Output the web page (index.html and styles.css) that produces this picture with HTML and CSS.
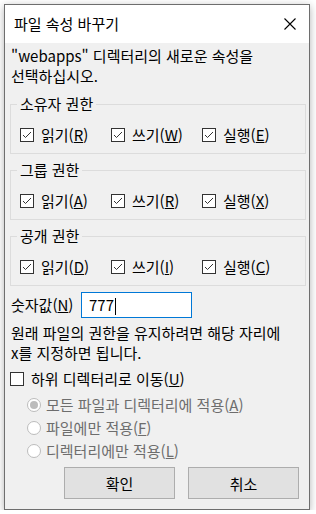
FILE: index.html
```html
<!DOCTYPE html>
<html lang="ko">
<head>
    <meta charset="UTF-8">
    <meta name="viewport" content="width=device-width, initial-scale=1.0">
    <title>파일 속성 바꾸기</title>
    <link rel="stylesheet" href="styles.css">
</head>
<body>

    <div class="dialog">
        <!-- title bar -->
        <div class="titlebar">
            <span class="title">파일 속성 바꾸기</span>
            <svg class="close" width="12" height="12" viewBox="0 0 12 12">
                <path d="M0.5 0.5 L11.5 11.5 M11.5 0.5 L0.5 11.5" stroke="#000" stroke-width="1.1" fill="none"/>
            </svg>
        </div>

        <div class="content">
            <p class="intro">"webapps" 디렉터리의 새로운 속성을<br>선택하십시오.</p>

            <fieldset class="group">
                <legend>소유자 권한</legend>
                <div class="checks">
                    <label class="check"><span class="box"><svg width="12" height="12" viewBox="0 0 12 12"><polyline points="2,6 4.5,8.5 10,3" fill="none" stroke="#333" stroke-width="1"/></svg></span><span>읽기(<u>R</u>)</span></label>
                    <label class="check"><span class="box"><svg width="12" height="12" viewBox="0 0 12 12"><polyline points="2,6 4.5,8.5 10,3" fill="none" stroke="#333" stroke-width="1"/></svg></span><span>쓰기(<u>W</u>)</span></label>
                    <label class="check"><span class="box"><svg width="12" height="12" viewBox="0 0 12 12"><polyline points="2,6 4.5,8.5 10,3" fill="none" stroke="#333" stroke-width="1"/></svg></span><span>실행(<u>E</u>)</span></label>
                </div>
            </fieldset>

            <fieldset class="group">
                <legend>그룹 권한</legend>
                <div class="checks">
                    <label class="check"><span class="box"><svg width="12" height="12" viewBox="0 0 12 12"><polyline points="2,6 4.5,8.5 10,3" fill="none" stroke="#333" stroke-width="1"/></svg></span><span>읽기(<u>A</u>)</span></label>
                    <label class="check"><span class="box"><svg width="12" height="12" viewBox="0 0 12 12"><polyline points="2,6 4.5,8.5 10,3" fill="none" stroke="#333" stroke-width="1"/></svg></span><span>쓰기(<u>R</u>)</span></label>
                    <label class="check"><span class="box"><svg width="12" height="12" viewBox="0 0 12 12"><polyline points="2,6 4.5,8.5 10,3" fill="none" stroke="#333" stroke-width="1"/></svg></span><span>실행(<u>X</u>)</span></label>
                </div>
            </fieldset>

            <fieldset class="group">
                <legend>공개 권한</legend>
                <div class="checks">
                    <label class="check"><span class="box"><svg width="12" height="12" viewBox="0 0 12 12"><polyline points="2,6 4.5,8.5 10,3" fill="none" stroke="#333" stroke-width="1"/></svg></span><span>읽기(<u>D</u>)</span></label>
                    <label class="check"><span class="box"><svg width="12" height="12" viewBox="0 0 12 12"><polyline points="2,6 4.5,8.5 10,3" fill="none" stroke="#333" stroke-width="1"/></svg></span><span>쓰기(<u>I</u>)</span></label>
                    <label class="check"><span class="box"><svg width="12" height="12" viewBox="0 0 12 12"><polyline points="2,6 4.5,8.5 10,3" fill="none" stroke="#333" stroke-width="1"/></svg></span><span>실행(<u>C</u>)</span></label>
                </div>
            </fieldset>

            <div class="num_row">
                <span class="num_label">숫자값(<u>N</u>)</span>
                <div class="num_input">777<span class="caret"></span></div>
            </div>

            <p class="hint">원래 파일의 권한을 유지하려면 해당 자리에<br>x를 지정하면 됩니다.</p>

            <label class="check subdir"><span class="box"></span><span>하위 디렉터리로 이동(<u>U</u>)</span></label>

            <div class="radios">
                <div class="radio"><span class="dot on"></span><span>모든 파일과 디렉터리에 적용(<u>A</u>)</span></div>
                <div class="radio"><span class="dot"></span><span>파일에만 적용(<u>F</u>)</span></div>
                <div class="radio"><span class="dot"></span><span>디렉터리에만 적용(<u>L</u>)</span></div>
            </div>

            <div class="buttons">
                <button>확인</button>
                <button>취소</button>
            </div>
        </div>
    </div>

</body>
</html>
```

FILE: styles.css
```css
body
{
    margin: 0;
    padding: 4px 0 0 4px;
    background-color: #fff;
    font-family: "Noto Sans CJK KR", "Noto Sans", sans-serif;
    font-size: 15px;
    color: #000;
}
.dialog
{
    width: 306px;
    box-sizing: border-box;
    border: 1px solid #6e6e6e;
    box-shadow: 0 2px 8px rgba(0, 0, 0, 0.3);
}
.titlebar
{
    height: 38px;
    background-color: #fff;
    display: flex;
    align-items: center;
    justify-content: space-between;
    padding: 0 13px 0 9px;
}
.title
{
    line-height: 20px;
}
.content
{
    background-color: #f0f0f0;
    padding: 3px 3px 10px 5px;
}
.intro
{
    margin: 0 0 8px 1px;
    line-height: 20px;
}

/* group boxes */
.group
{
    margin: 0 0 6px 0;
    padding: 11px 0 8px 9px;
    border: 1px solid #dcdcdc;
}
.group legend
{
    margin-left: -3px;
    padding: 0 3px;
    line-height: 20px;
}
.checks
{
    display: grid;
    grid-template-columns: repeat(3, 91px);
}
.check
{
    display: flex;
    align-items: center;
    gap: 7px;
    height: 20px;
    line-height: 20px;
    white-space: nowrap;
}
.box
{
    flex: none;
    width: 14px;
    height: 14px;
    box-sizing: border-box;
    border: 1px solid #333;
    background-color: #fff;
    display: flex;
    align-items: center;
    justify-content: center;
}

/* number field */
.num_row
{
    display: flex;
    align-items: center;
    height: 26px;
}
.num_label
{
    width: 70px;
    padding-left: 1px;
    line-height: 20px;
}
.num_input
{
    width: 111px;
    height: 26px;
    box-sizing: border-box;
    border: 1px solid #0078d7;
    background-color: #fff;
    padding-left: 7px;
    line-height: 24px;
}
.caret
{
    display: inline-block;
    width: 1px;
    height: 17px;
    margin-left: 1px;
    background-color: #000;
    vertical-align: -4px;
}
.hint
{
    margin: 5px 0 0 1px;
    line-height: 20px;
}
.subdir
{
    margin-top: 6px;
}

/* disabled radios */
.radios
{
    margin-top: 6px;
    padding-left: 17px;
    display: flex;
    flex-direction: column;
    gap: 3px;
    color: #6d6d6d;
}
.radio
{
    display: flex;
    align-items: center;
    gap: 5px;
    height: 20px;
    line-height: 20px;
    white-space: nowrap;
}
.dot
{
    flex: none;
    width: 14px;
    height: 14px;
    box-sizing: border-box;
    border: 1px solid #bcbcbc;
    border-radius: 50%;
    background-color: #fff;
    display: flex;
    align-items: center;
    justify-content: center;
}
.dot.on::after
{
    content: "";
    width: 8px;
    height: 8px;
    border-radius: 50%;
    background-color: #bcbcbc;
}

/* buttons */
.buttons
{
    display: flex;
    justify-content: flex-end;
    gap: 13px;
    margin-top: 6px;
    padding-right: 7px;
}
button
{
    width: 111px;
    height: 32px;
    border: 1px solid #adadad;
    background-color: #e1e1e1;
    font-family: inherit;
    font-size: 15px;
    color: #000;
    padding: 0;
}
```
